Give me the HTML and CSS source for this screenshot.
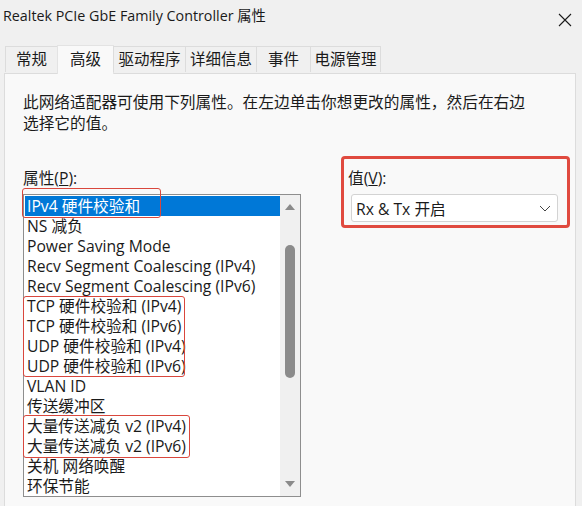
FILE: index.html
```html
<!DOCTYPE html>
<html lang="zh-CN">
<head>
<meta charset="utf-8">
<title>Realtek PCIe GbE Family Controller 属性</title>
<link rel="stylesheet" href="styles.css">
</head>
<body>
<div class="window">
  <div class="titlebar">
    <span class="title">Realtek PCIe GbE Family Controller 属性</span>
    <svg class="close" width="14" height="14" viewBox="0 0 14 14"><path d="M1 1L13 13M13 1L1 13" stroke="#1a1a1a" stroke-width="1.1" fill="none"/></svg>
  </div>
  <div class="tabs">
    <div class="tab t1">常规</div>
    <div class="tab active t2">高级</div>
    <div class="tab t3">驱动程序</div>
    <div class="tab t4">详细信息</div>
    <div class="tab t5">事件</div>
    <div class="tab t6">电源管理</div>
  </div>
  <div class="panel">
    <p class="desc">此网络适配器可使用下列属性。在左边单击你想更改的属性，然后在右边<br>选择它的值。</p>
    <div class="columns">
      <div class="left">
        <div class="label">属性(<u>P</u>):</div>
        <div class="listbox">
          <ul class="items">
            <li class="sel">IPv4 硬件校验和</li>
            <li>NS 减负</li>
            <li>Power Saving Mode</li>
            <li>Recv Segment Coalescing (IPv4)</li>
            <li>Recv Segment Coalescing (IPv6)</li>
            <li>TCP 硬件校验和 (IPv4)</li>
            <li>TCP 硬件校验和 (IPv6)</li>
            <li>UDP 硬件校验和 (IPv4)</li>
            <li>UDP 硬件校验和 (IPv6)</li>
            <li>VLAN ID</li>
            <li>传送缓冲区</li>
            <li>大量传送减负 v2 (IPv4)</li>
            <li>大量传送减负 v2 (IPv6)</li>
            <li>关机 网络唤醒</li>
            <li>环保节能</li>
          </ul>
          <div class="scrollbar">
            <svg class="arrow" width="10" height="6" viewBox="0 0 10 6"><path d="M0 6L5 0L10 6Z" fill="#8a8a8a"/></svg>
            <div class="track"><div class="thumb"></div></div>
            <svg class="arrow" width="10" height="6" viewBox="0 0 10 6"><path d="M0 0L5 6L10 0Z" fill="#8a8a8a"/></svg>
          </div>
          <div class="mark m1"></div>
          <div class="mark m2"></div>
          <div class="mark m3"></div>
        </div>
      </div>
      <div class="right">
        <div class="label">值(<u>V</u>):</div>
        <div class="combo">
          <span>Rx &amp; Tx 开启</span>
          <svg width="12" height="7" viewBox="0 0 12 7"><path d="M1 1L6 6L11 1" stroke="#444" stroke-width="1" fill="none"/></svg>
        </div>
        <div class="mark m4"></div>
      </div>
    </div>
  </div>
</div>
</body>
</html>
```
FILE: styles.css
```css
* { box-sizing: border-box; }
html, body { margin: 0; padding: 0; }
body {
  background: #f0f0f0;
  font-family: "Open Sans", "Noto Sans CJK SC", sans-serif;
  font-size: 15.7px;
  color: #1a1a1a;
  width: 582px;
  height: 506px;
  overflow: hidden;
}
.window { position: relative; height: 506px; }
.titlebar {
  height: 45px;
  display: flex;
  align-items: flex-start;
  justify-content: space-between;
  padding: 5px 10px 0 3px;
}
.title { font-size: 14.3px; line-height: 22px; }
.close { margin-top: 8px; }
.tabs {
  display: flex;
  padding-left: 5px;
  height: 28px;
  align-items: flex-end;
  position: relative;
  z-index: 2;
  font-size: 15.5px;
}
.tab {
  height: 26px;
  line-height: 25px;
  text-align: center;
  border: 1px solid #dcdcdc;
  border-bottom: none;
  background: #f0f0f0;
  margin-right: -1px;
  margin-bottom: 1px;
}
.tab.active {
  height: 29px;
  line-height: 27px;
  background: #f9f9f9;
  margin-bottom: -1px;
  border-color: #e3e3e3;
}
.t1 { width: 53px; }
.t2 { width: 57px; }
.t3 { width: 73px; }
.t4 { width: 72px; }
.t5 { width: 55px; }
.t6 { width: 71px; }
.panel {
  margin: 0 6px 0 4px;
  height: 440px;
  background: #f9f9f9;
  border: 1px solid #dcdcdc;
  padding: 18px 0 0 18px;
}
.desc { margin: 0; line-height: 21px; }
.columns { display: flex; margin-top: 34px; }
.left { width: 278px; position: relative; }
.right { margin-left: 47px; width: 222px; position: relative; }
.label { line-height: 20px; height: 20px; }
.listbox {
  margin-top: 6px;
  width: 278px;
  height: 303px;
  border: 1px solid #8e8e8e;
  background: #fff;
  display: flex;
  position: relative;
}
.items {
  list-style: none;
  margin: 0;
  padding: 1px 0 0 1px;
  flex: 1;
}
.items li {
  height: 20px;
  line-height: 20px;
  padding-left: 2px;
  white-space: nowrap;
}
.items li.sel { background: #0078d7; color: #fff; }
.scrollbar {
  width: 20px;
  background: #f0f0f0;
  display: flex;
  flex-direction: column;
  align-items: center;
  padding: 9px 0 9px;
}
.track { flex: 1; width: 100%; padding: 35px 0 0 5px; }
.thumb { width: 10px; height: 133px; border-radius: 5px; background: #8b8b8b; }
.combo {
  margin: 6px 0 0 3px;
  width: 207px;
  height: 28px;
  border: 1px solid #d3d3d3;
  border-radius: 3px;
  background: #fff;
  display: flex;
  align-items: center;
  justify-content: space-between;
  padding: 0 6px 0 4px;
}
.mark { position: absolute; border: 1px solid #d9473d; border-radius: 3px; pointer-events: none; }
.m1 { left: -2px; top: -7px; width: 139px; height: 30px; }
.m2 { left: -1px; top: 101px; width: 162px; height: 81px; }
.m3 { left: -1px; top: 220px; width: 167px; height: 43px; }
.m4 { left: -7px; top: -12px; width: 229px; height: 72px; border: 3px solid #e04a3f; border-radius: 4px; }
```
